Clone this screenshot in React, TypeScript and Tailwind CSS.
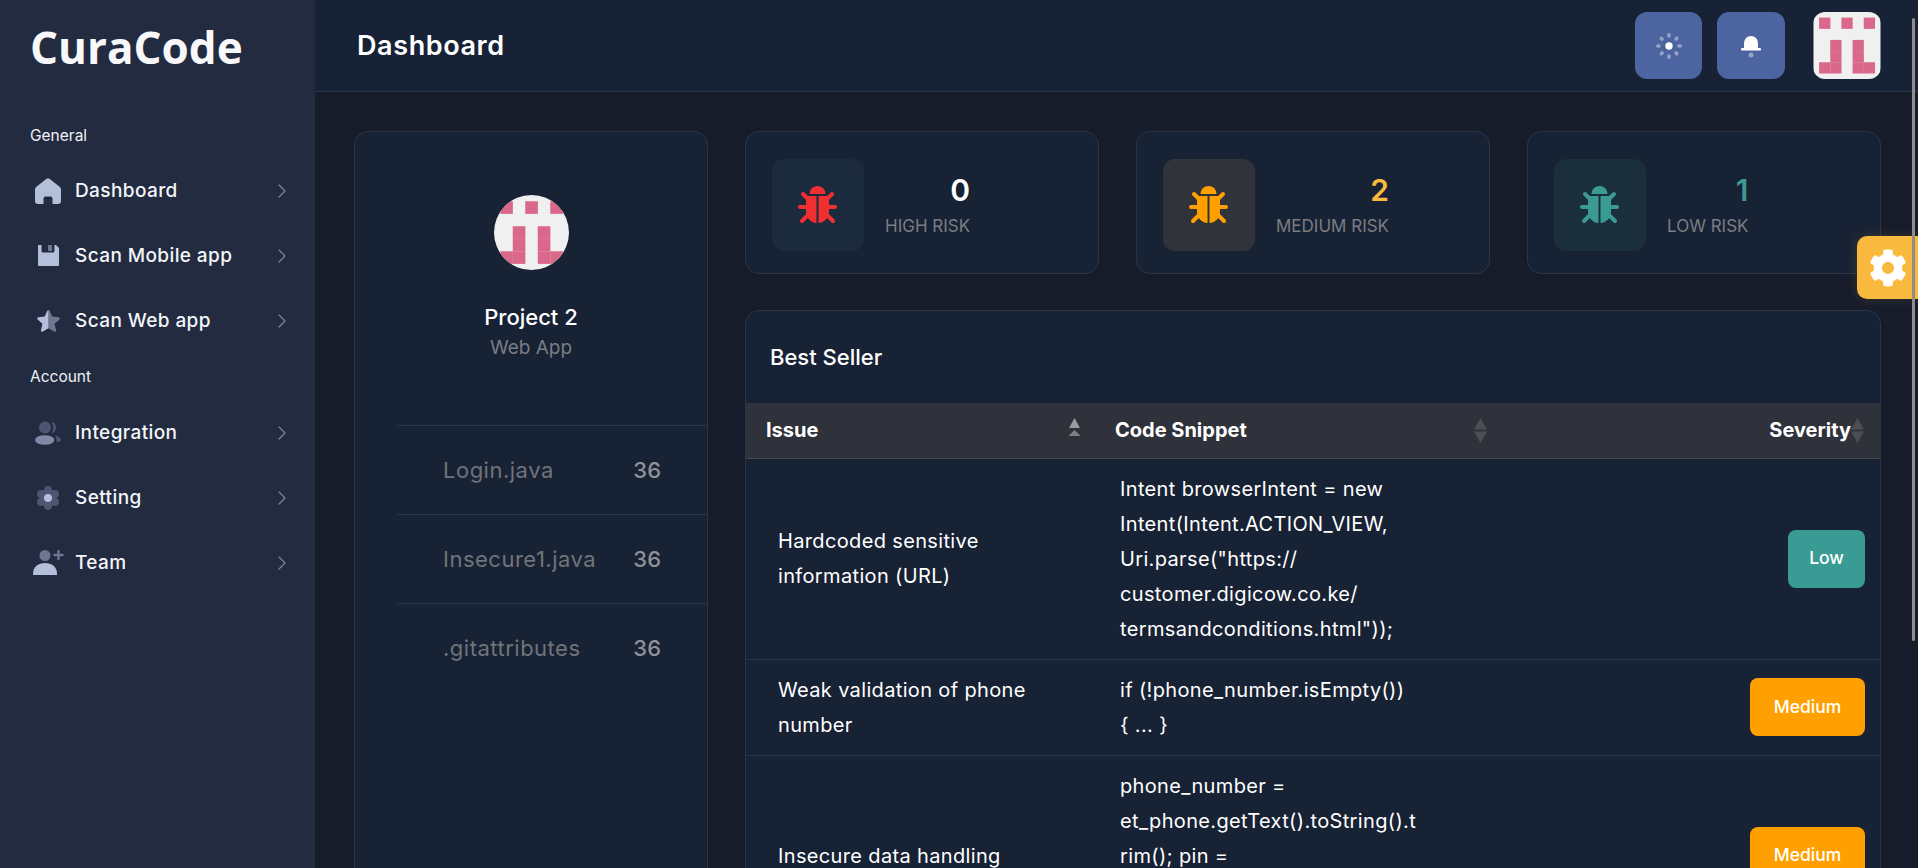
import { ChevronRight } from 'lucide-react'
import { FaCog } from 'react-icons/fa'

// identicon used as the project logo
function Identicon({ className }: { className?: string }) {
  const cells = [
    [0, 0], [2, 0], [4, 0],
    [1, 2], [3, 2],
    [1, 3], [3, 3],
    [0, 4], [1, 4], [3, 4], [4, 4],
  ]
  return (
    <svg viewBox="0 0 6 6" className={className}>
      <rect width="6" height="6" fill="#f0f0f0" />
      {cells.map(([x, y]) => (
        <rect key={`${x}-${y}`} x={x + 0.5} y={y + 0.5} width="1.01" height="1.01" fill="#d9688a" />
      ))}
    </svg>
  )
}

function BugIcon({ color, className }: { color: string; className?: string }) {
  return (
    <svg viewBox="0 0 40 40" className={className} fill={color} stroke={color}>
      <path d="M11.5 9a8 8 0 0 1 16 0z" stroke="none" />
      <path d="M8 11h10.5v27C12.500 37.500 8 33 8 26z" stroke="none" />
      <path d="M31 11H20.500v27C26.500 37.500 31 33 31 26z" stroke="none" />
      <g strokeWidth="4" strokeLinecap="round" fill="none">
        <path d="M12 16 5 9M27 16l7-7M2 22h9M28 22h9M11 29l-7 7M28 29l7 7" />
      </g>
    </svg>
  )
}

const light = '#b4c0da'
const dim = '#4c5671'
const mid = '#6d7790'

const navIcons = {
  home: (
    <svg viewBox="0 0 26 26" className="w-[26px] h-[26px]">
      <path fill={light} d="M11.500.800a2.400 2.400 0 0 1 3 0l9.800 7.700c1 .8 1.700 2 1.700 3.300V23a3 3 0 0 1-3 3h-5.500v-5.500a2 2 0 0 0-2-2h-5a2 2 0 0 0-2 2V26H3a3 3 0 0 1-3-3V11.800c0-1.300.7-2.500 1.700-3.300z" />
    </svg>
  ),
  save: (
    <svg viewBox="0 0 21 21" className="w-[21px] h-[21px]">
      <path fill={light} d="M1 0h2.500v6c0 .8.700 1.500 1.500 1.500h10c.8 0 1.500-.7 1.500-1.500V0H18l3 3v17a1 1 0 0 1-1 1H1a1 1 0 0 1-1-1V1a1 1 0 0 1 1-1z" />
      <rect x="10" y="0" width="4" height="6" fill={mid} />
    </svg>
  ),
  star: (
    <svg viewBox="0 0 23 22" className="w-[23px] h-[22px]">
      <path fill={mid} d="M11.500 0c.5 0 1 .3 1.200.8l2.500 5.800 6.400.6c1.100.1 1.600 1.500.8 2.300l-4.800 4.300 1.400 6.300c.3 1.100-.9 2-1.900 1.400l-5.600-3.300z" />
      <path fill={light} d="M11.500 0c-.5 0-1 .3-1.200.8L7.800 6.600l-6.400.6C.3 7.300-.2 8.700.6 9.500l4.800 4.300L4 20.100c-.3 1.100.9 2 1.900 1.400l5.600-3.300z" />
    </svg>
  ),
  users: (
    <svg viewBox="0 0 26 24" className="w-[26px] h-[24px]">
      <path fill={dim} d="M16 .500a6 6 0 0 1 0 11.800c1.400-1.500 2.300-3.500 2.300-5.900S17.400 2 16 .500zM20 14.500c3.500.8 6 2.500 6 4.500 0 .8-.5 1.300-1.500 1.500l-3 1c.3-2.800-.3-5-1.500-7z" />
      <circle cx="10" cy="6.500" r="6" fill={dim} />
      <ellipse cx="9.700" cy="19" rx="9.700" ry="4.800" fill="#7e8aa5" />
    </svg>
  ),
  gear: (
    <svg viewBox="0 0 24 24" className="w-[24px] h-[24px]">
      <g fill={dim}>
        <circle cx="12" cy="12" r="9" />
        <circle cx="12" cy="4" r="4" />
        <circle cx="12" cy="20" r="4" />
        <circle cx="5" cy="8" r="4" />
        <circle cx="19" cy="8" r="4" />
        <circle cx="5" cy="16" r="4" />
        <circle cx="19" cy="16" r="4" />
      </g>
      <circle cx="12" cy="12" r="4" fill={light} />
    </svg>
  ),
  team: (
    <svg viewBox="0 0 31 25" className="w-[31px] h-[25px]">
      <circle cx="12" cy="5.500" r="5.500" fill={mid} />
      <path fill={light} d="M0 25v-1.500C0 17 5.500 13 12 13s12 4 12 10.500V25z" />
      <path d="M25.500 1v8M21.500 5h8" stroke={mid} strokeWidth="2.400" strokeLinecap="round" />
    </svg>
  ),
}

function NavItem({ icon, label }: { icon: React.ReactNode; label: string }) {
  return (
    <div className="flex items-center h-[65px] pl-[26px] pr-[21px]">
      <span className="w-[44px] mr-[5px] flex justify-center shrink-0">{icon}</span>
      <span className="flex-1 pt-[2px] text-[19px] tracking-[0.4px] font-medium text-[#f4f5f8]">{label}</span>
      <ChevronRight className="w-[24px] h-[24px] text-[#7d8699]" strokeWidth={1.2} />
    </div>
  )
}

function RiskCard({
  value,
  label,
  color,
  box,
  valueColor,
}: {
  value: string
  label: string
  color: string
  box: string
  valueColor: string
}) {
  return (
    <div className="flex items-start h-[143px] pl-[26px] pt-[27px] bg-[#182235] border border-[#2b3548] rounded-[14px]">
      <div className={`w-[92px] h-[92px] rounded-[12px] flex items-center justify-center ${box}`}>
        <BugIcon color={color} className="w-[40px] h-[40px]" />
      </div>
      <div className="ml-[21px] pt-[11px] flex flex-col items-end">
        <span className={`text-[30px] leading-[40px] font-semibold ${valueColor}`}>{value}</span>
        <span className="mt-[4px] text-[17px] leading-[24px] text-[#7b7d82]">{label}</span>
      </div>
    </div>
  )
}

function SortArrows({ active }: { active?: boolean }) {
  return (
    <svg viewBox="0 0 13 25" className="w-[13px] h-[25px] shrink-0">
      {active ? (
        <>
          <path d="M6.500 0 12 10H1z" fill="#9a9ca1" />
          <path d="M6.500 12 12.500 18H.5z" fill="#7f8187" />
        </>
      ) : (
        <>
          <path d="M6.500 0 13 11.500H0z" fill="#4b4e55" />
          <path d="M6.500 25 13 13.500H0z" fill="#4b4e55" />
        </>
      )}
    </svg>
  )
}

function Badge({ level }: { level: 'Low' | 'Medium' }) {
  return (
    <span
      className={`inline-flex items-center justify-center h-[58px] rounded-[8px] text-[17.500px] font-medium text-white ${
        level === 'Low' ? 'w-[77px] bg-[#3a9b94]' : 'w-[115px] bg-[#ffa000]'
      }`}
    >
      {level}
    </span>
  )
}

const rows: { issue: string[]; code: string[]; severity: 'Low' | 'Medium' }[] = [
  {
    issue: ['Hardcoded sensitive', 'information (URL)'],
    code: [
      'Intent browserIntent = new',
      'Intent(Intent.ACTION_VIEW,',
      'Uri.parse("https://',
      'customer.digicow.co.ke/',
      'termsandconditions.html"));',
    ],
    severity: 'Low',
  },
  {
    issue: ['Weak validation of phone', 'number'],
    code: ['if (!phone_number.isEmpty())', '{ ... }'],
    severity: 'Medium',
  },
  {
    issue: ['Insecure data handling'],
    code: [
      'phone_number =',
      'et_phone.getText().toString().t',
      'rim(); pin =',
      'et_pin.getText().toString().trim',
      '();',
    ],
    severity: 'Medium',
  },
]

const files = ['Login.java', 'Insecure1.java', '.gitattributes']

export default function App() {
  return (
    <div className="relative flex h-[868px] overflow-hidden bg-[#171c2b] font-['Inter',sans-serif] text-white">
      {/* sidebar */}
      <aside className="w-[315px] shrink-0 bg-[#222b40]">
        <div className="h-[92px] pl-[30px] pt-[17px] font-['Open_Sans',sans-serif] font-bold text-[44px] leading-[60px] text-[#f8f8fa]">
          CuraCode
        </div>
        <p className="mt-[34px] mb-[12px] pl-[30px] text-[15.500px] leading-[20px] text-[#f0f1f4]">General</p>
        <NavItem icon={navIcons.home} label="Dashboard" />
        <NavItem icon={navIcons.save} label="Scan Mobile app" />
        <NavItem icon={navIcons.star} label="Scan Web app" />
        <p className="mt-[14px] mb-[13px] pl-[30px] text-[15.500px] leading-[20px] text-[#f0f1f4]">Account</p>
        <NavItem icon={navIcons.users} label="Integration" />
        <NavItem icon={navIcons.gear} label="Setting" />
        <NavItem icon={navIcons.team} label="Team" />
      </aside>

      <div className="flex-1 min-w-0 flex flex-col">
        {/* header */}
        <header className="h-[92px] shrink-0 flex items-center bg-[#182236] border-b border-[#2b3548] pl-[42px] pr-[37px]">
          <h1 className="flex-1 pt-[2px] text-[27px] tracking-[0.6px] font-semibold">Dashboard</h1>
          <button className="w-[67px] h-[67px] rounded-[12px] bg-[#4c64a0] flex items-center justify-center">
            <svg viewBox="0 0 26 26" className="w-[26px] h-[26px]">
              <circle cx="13" cy="13" r="3.700" fill="#fff" />
              <g stroke="#94a2c6" strokeWidth="3.600" strokeLinecap="round">
                <path d="M13 1.800v1.200M13 23v1.200M1.800 13H3M23 13h1.200M5.300 5.300l.8.8M20 20l.8.8M5.300 20.700l.8-.8M20 6l.8-.8" />
              </g>
            </svg>
          </button>
          <button className="ml-[15px] w-[68px] h-[67px] rounded-[12px] bg-[#4c64a0] flex items-center justify-center">
            <svg viewBox="0 0 20 24" className="w-[20px] h-[24px]">
              <path fill="#fff" d="M3 14V9a7 7 0 0 1 14 0v5h2a1 1 0 0 1 0 2.500H1A1 1 0 0 1 1 14z" />
              <circle cx="10" cy="21" r="2.500" fill="#94a2c6" />
            </svg>
          </button>
          <div className="ml-[28px] w-[68px] h-[67px] rounded-[12px] overflow-hidden">
            <Identicon className="w-full h-full" />
          </div>
        </header>

        {/* content */}
        <main className="flex-1 flex gap-[37px] pl-[39px] pr-[37px] pt-[39px] min-h-0">
          <section className="w-[354px] shrink-0 h-[900px] bg-[#182235] border border-[#2b3548] rounded-[14px] pl-[42px]">
            <div className="flex flex-col items-center pt-[63px] -ml-[42px] h-[293px]">
              <Identicon className="w-[75px] h-[75px] rounded-full" />
              <p className="mt-[32px] text-[22px] leading-[30px] font-medium">Project 2</p>
              <p className="mt-[2px] text-[19px] leading-[28px] text-[#7b7d82]">Web App</p>
            </div>
            {files.map((name) => (
              <div key={name} className="flex items-center h-[89px] border-t border-[#2b3548] pl-[46px] pr-[46px]">
                <span className="flex-1 text-[22px] tracking-[0.5px] text-[#707379]">{name}</span>
                <span className="text-[22px] font-medium text-[#8f9298]">36</span>
              </div>
            ))}
          </section>

          <div className="flex-1 min-w-0">
            <div className="grid grid-cols-3 gap-[37px]">
              <RiskCard value="0" label="HIGH RISK" color="#f03030" box="bg-[#1b2a3c]" valueColor="text-white" />
              <RiskCard value="2" label="MEDIUM RISK" color="#ffa000" box="bg-[#30343a]" valueColor="text-[#f9b93f]" />
              <RiskCard value="1" label="LOW RISK" color="#3a9b94" box="bg-[#1a2e3c]" valueColor="text-[#3a9b94]" />
            </div>

            <div className="mt-[36px] bg-[#182235] border border-[#2b3548] rounded-[14px] overflow-hidden">
              <h2 className="h-[92px] flex items-center pl-[24px] text-[22px] font-medium">Best Seller</h2>
              <table className="w-full table-fixed border-collapse">
                <colgroup>
                  <col className="w-[349px]" />
                  <col className="w-[406px]" />
                  <col />
                </colgroup>
                <thead>
                  <tr className="h-[55px] bg-[#2f323a] border-b border-[#45484e]">
                    <th className="pl-[20px] pr-[14px] text-left">
                      <div className="flex items-center justify-between text-[20px] font-bold">
                        Issue <SortArrows active />
                      </div>
                    </th>
                    <th className="pl-[20px] pr-[14px] text-left">
                      <div className="flex items-center justify-between text-[20px] font-bold">
                        Code Snippet <SortArrows />
                      </div>
                    </th>
                    <th className="pr-[16px]">
                      <div className="flex items-center justify-end text-[20px] font-bold">
                        Severity
                        <SortArrows />
                      </div>
                    </th>
                  </tr>
                </thead>
                <tbody>
                  {rows.map((row, i) => (
                    <tr key={i} className="border-b border-[#2b3548]">
                      <td className="pl-[32px] pt-[13px] pb-[12px] text-[20px] tracking-[0.35px] leading-[35px] whitespace-nowrap">
                        {row.issue.map((line) => (
                          <div key={line}>{line}</div>
                        ))}
                      </td>
                      <td className="pl-[25px] pt-[13px] pb-[12px] text-[20px] tracking-[0.35px] leading-[35px] whitespace-nowrap">
                        {row.code.map((line) => (
                          <div key={line}>{line}</div>
                        ))}
                      </td>
                      <td className="pr-[15px] text-right">
                        <Badge level={row.severity} />
                      </td>
                    </tr>
                  ))}
                </tbody>
              </table>
            </div>
          </div>
        </main>
      </div>

      {/* floating settings tab */}
      <button className="absolute left-[1857px] top-[236px] w-[61px] h-[63px] bg-[#f9b93f] rounded-l-[10px] pl-[12px] flex items-center shadow-[0_0_12px_rgba(249,185,63,0.15)]">
        <FaCog className="w-[38px] h-[38px] text-white" />
      </button>
      {/* page scrollbar */}
      <div className="absolute left-[1912px] top-[18px] w-[3px] h-[623px] rounded-full bg-[#8d8d8d]" />
    </div>
  )
}
